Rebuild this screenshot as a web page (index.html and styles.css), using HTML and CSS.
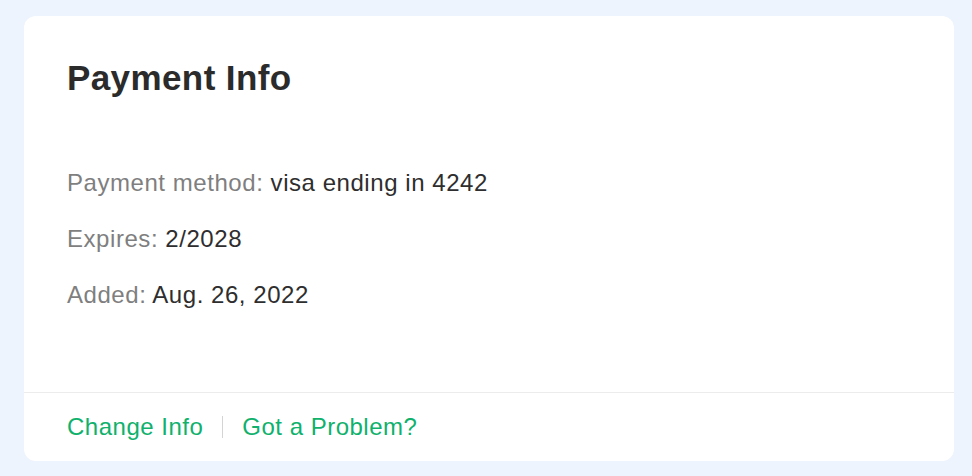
FILE: index.html
```html
<!DOCTYPE html>
<html>
<head>
<meta charset="utf-8">
<link rel="stylesheet" href="styles.css">
</head>
<body>
<div class="page">
  <section class="card">
    <div class="card-body">
      <h1 class="title">Payment Info</h1>
      <ul class="info">
        <li class="row"><span class="label">Payment method:</span> <span class="value">visa ending in 4242</span></li>
        <li class="row"><span class="label">Expires:</span> <span class="value">2/2028</span></li>
        <li class="row"><span class="label">Added:</span> <span class="value">Aug. 26, 2022</span></li>
      </ul>
    </div>
    <div class="card-footer">
      <a class="link" href="#">Change Info</a>
      <span class="sep"></span>
      <a class="link" href="#">Got a Problem?</a>
    </div>
  </section>
</div>
</body>
</html>
```
FILE: styles.css
```css
* { box-sizing: border-box; }
html, body { margin: 0; padding: 0; }
body {
  background: #edf4fd;
  font-family: "Liberation Sans", Arial, sans-serif;
  width: 972px;
  height: 476px;
  overflow: hidden;
}
.page {
  padding: 16px 18px 15px 24px;
}
.card {
  background: #ffffff;
  border-radius: 12px;
  height: 445px;
  display: flex;
  flex-direction: column;
}
.card-body {
  flex: 1;
  padding: 40px 43px 0 43px;
}
.title {
  margin: 0;
  font-size: 35px;
  line-height: 44px;
  font-weight: 700;
  letter-spacing: 0.4px;
  color: #2b2b2b;
}
.info {
  list-style: none;
  margin: 70px 0 0 0;
  padding: 0;
  display: flex;
  flex-direction: column;
  gap: 30px;
}
.row {
  font-size: 24px;
  line-height: 26px;
  letter-spacing: 0.55px;
}
.label { color: #7f7f7f; }
.value { color: #2e2e2e; }
.card-footer {
  border-top: 1px solid #ececec;
  height: 69px;
  padding: 0 43px;
  display: flex;
  align-items: center;
  gap: 19px;
}
.link {
  color: #0fb16c;
  text-decoration: none;
  font-size: 24px;
  line-height: 26px;
  letter-spacing: 0.5px;
}
.sep {
  width: 1px;
  height: 22px;
  background: #d4d4d4;
}
```
